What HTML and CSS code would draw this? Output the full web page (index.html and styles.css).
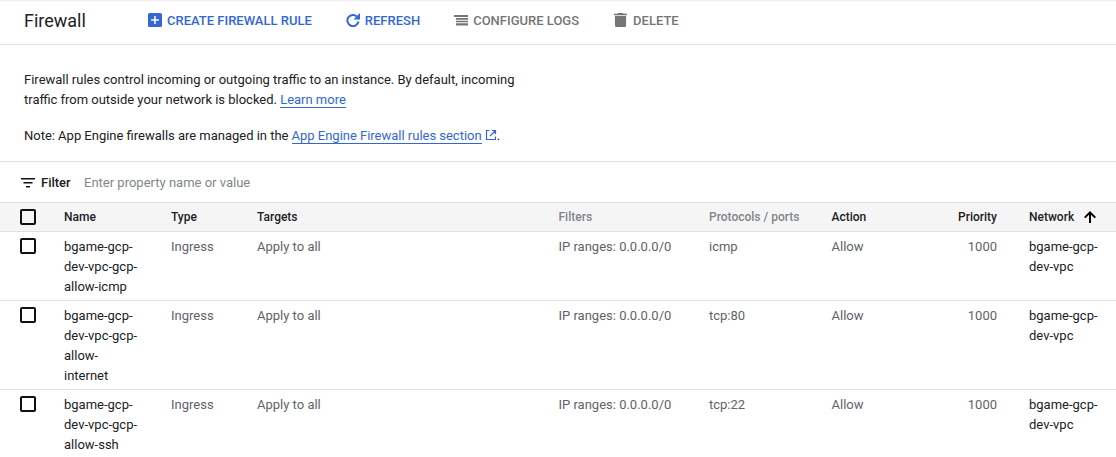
FILE: index.html
```html
<!DOCTYPE html>
<html lang="en">
<head>
<meta charset="utf-8">
<title>Firewall</title>
<link rel="stylesheet" href="styles.css">
</head>
<body>
<header class="toolbar">
  <h1 class="title">Firewall</h1>
  <nav class="actions">
    <a class="action primary create"><svg class="ico" viewBox="0 0 18 18"><path fill="currentColor" fill-rule="evenodd" d="M2 0h14a2 2 0 0 1 2 2v14a2 2 0 0 1-2 2H2a2 2 0 0 1-2-2V2a2 2 0 0 1 2-2zm6 4v4H4v2h4v4h2v-4h4V8h-4V4z"/></svg>Create firewall rule</a>
    <a class="action primary refresh"><svg class="ico" viewBox="0 0 14 14"><path fill="none" stroke="currentColor" stroke-width="2" d="M10.800 3.400A5.600 5.600 0 1 0 12.500 8.500"/><path fill="currentColor" d="M14 0v6.500H7.500z"/></svg>Refresh</a>
    <a class="action muted logs"><svg class="ico" viewBox="0 0 14 11"><path fill="currentColor" d="M0 0h14v2H0zM2 3h12v1.700H2zM2 5.700h12v1.600H2zM2 8.300h12V10.500H2z"/></svg>Configure logs</a>
    <a class="action muted trash"><svg class="ico" viewBox="5 3 14 18" preserveAspectRatio="none"><path fill="currentColor" d="M6 19a2 2 0 0 0 2 2h8a2 2 0 0 0 2-2V7H6zM19 4h-3.500l-1-1h-5l-1 1H5v2h14z"/></svg>Delete</a>
  </nav>
</header>

<section class="intro">
  <p class="intro-text">Firewall rules control incoming or outgoing traffic to an instance. By default, incoming traffic from outside your network is blocked. <a class="link">Learn more</a></p>
  <p class="note">Note: App Engine firewalls are managed in the <a class="link">App Engine Firewall rules section</a> <svg class="ext" viewBox="0 0 12 12"><path fill="none" stroke="currentColor" stroke-width="1.200" d="M4.500 1.500h-3v9h9v-3M7 1.500h3.500V5M10.500 1.500 5 7"/></svg>.</p>
</section>

<div class="filter">
  <svg class="filter-ico" viewBox="0 0 14 10"><path fill="currentColor" d="M0 0h14v1.500H0zM2.500 4h9v1.500h-9zM5 8h4v1.500H5z"/></svg>
  <span class="filter-label">Filter</span>
  <span class="filter-hint">Enter property name or value</span>
</div>

<table class="rules">
  <colgroup>
    <col class="c-check"><col class="c-name"><col class="c-type"><col class="c-targets"><col class="c-filters"><col class="c-proto"><col class="c-action"><col class="c-priority"><col class="c-network">
  </colgroup>
  <thead>
    <tr>
      <th class="check"><span class="box"></span></th>
      <th>Name</th>
      <th>Type</th>
      <th>Targets</th>
      <th class="dim">Filters</th>
      <th class="dim">Protocols / ports</th>
      <th>Action</th>
      <th class="num">Priority</th>
      <th class="net">Network<svg class="arrow" viewBox="0 0 12 12"><path fill="currentColor" d="M5 12V3.700L1.400 7.300 0 6l6-6 6 6-1.400 1.300L7 3.700V12z"/></svg></th>
    </tr>
  </thead>
  <tbody>
    <tr>
      <td class="check"><span class="box"></span></td>
      <td class="dark">bgame-gcp-dev-vpc-gcp-allow-icmp</td>
      <td>Ingress</td>
      <td>Apply to all</td>
      <td>IP ranges: 0.0.0.0/0</td>
      <td>icmp</td>
      <td>Allow</td>
      <td class="num">1000</td>
      <td class="dark">bgame-gcp-dev-vpc</td>
    </tr>
    <tr>
      <td class="check"><span class="box"></span></td>
      <td class="dark">bgame-gcp-dev-vpc-gcp-allow-internet</td>
      <td>Ingress</td>
      <td>Apply to all</td>
      <td>IP ranges: 0.0.0.0/0</td>
      <td>tcp:80</td>
      <td>Allow</td>
      <td class="num">1000</td>
      <td class="dark">bgame-gcp-dev-vpc</td>
    </tr>
    <tr>
      <td class="check"><span class="box"></span></td>
      <td class="dark">bgame-gcp-dev-vpc-gcp-allow-ssh</td>
      <td>Ingress</td>
      <td>Apply to all</td>
      <td>IP ranges: 0.0.0.0/0</td>
      <td>tcp:22</td>
      <td>Allow</td>
      <td class="num">1000</td>
      <td class="dark">bgame-gcp-dev-vpc</td>
    </tr>
  </tbody>
</table>
</body>
</html>
```
FILE: styles.css
```css
* { box-sizing: border-box; }
html, body { margin: 0; padding: 0; background: #fff; overflow: hidden; }
body { font: 13px/20px Roboto, sans-serif; color: #202124; height: 457px; }
p { margin: 0; }

.toolbar {
  display: flex; align-items: center; height: 45px; padding: 0 0 2px 24px;
  border-bottom: 1px solid #e0e0e0;
  background: linear-gradient(#ececec, #fff 2px);
}
.title { margin: 0; width: 124px; font-size: 18px; font-weight: 400; color: #202124; }
.actions { display: flex; align-items: center; }
.action {
  display: flex; align-items: center; font-size: 13px; font-weight: 500;
  text-transform: uppercase; margin-right: 33px;
}
.ico { flex: none; }
.primary { color: #3367d6; }
.muted { color: #757575; }
.create .ico { width: 14px; height: 14px; margin: -2px 5px 0 0; }
.refresh .ico { width: 14px; height: 14px; margin: -2px 5px 0 1px; }
.logs .ico { width: 14px; height: 11px; margin: -2px 5px 0 1px; }
.trash .ico { width: 13px; height: 14px; margin: -2px 6px 0 2px; }
.trash { margin-right: 0; }

.intro { padding: 25px 24px 0; height: 117px; border-bottom: 1px solid #e0e0e0; }
.intro-text { width: 500px; word-spacing: -.08px; }
.note { margin-top: 16px; word-spacing: -.1px; }
.link { color: #3367d6; border-bottom: 1px solid #3367d6; }
.ext { width: 12px; height: 12px; color: #3367d6; vertical-align: -1px; }

.filter { display: flex; align-items: center; height: 40px; padding: 2px 0 0 21px; }
.filter-ico { width: 14px; height: 10px; margin-right: 6px; color: #111; }
.filter-label { font-size: 13px; font-weight: 500; color: #202124; width: 43px; }
.filter-hint { font-size: 13px; color: #80868b; }

.rules { width: 1116px; table-layout: fixed; border-collapse: collapse; }
.c-check { width: 64px; } .c-name { width: 107px; } .c-type { width: 86px; }
.c-targets { width: 301.500px; } .c-filters { width: 150.500px; } .c-proto { width: 122.500px; }
.c-action { width: 99.500px; } .c-priority { width: 98px; } .c-network { width: 87px; }
.rules th {
  height: 29px; padding: 0; text-align: left; font-size: 12px; font-weight: 500; color: #202124;
  background: #f5f5f5; border-top: 1px solid #e0e0e0; border-bottom: 1px solid #e0e0e0;
}
.rules th.dim { color: #80868b; }
.rules td {
  padding: 5px 0 3px; vertical-align: top; color: #5f6368; border-bottom: 1px solid #e0e0e0;
}
.rules td.dark { color: #202124; padding-right: 31px; }
.rules td:nth-child(9) { padding-right: 12px; }
.rules .num { text-align: right; padding-right: 32px; }
.rules .check { padding-left: 20px; }
.rules td.check { padding-top: 6px; }
.box { display: block; width: 16px; height: 16px; border: 2px solid #111; border-radius: 2px; background: #fff; }
th .box { background: transparent; }
.net { white-space: nowrap; }
.arrow { width: 12px; height: 12px; margin-left: 10px; vertical-align: -2px; color: #000; }
```
